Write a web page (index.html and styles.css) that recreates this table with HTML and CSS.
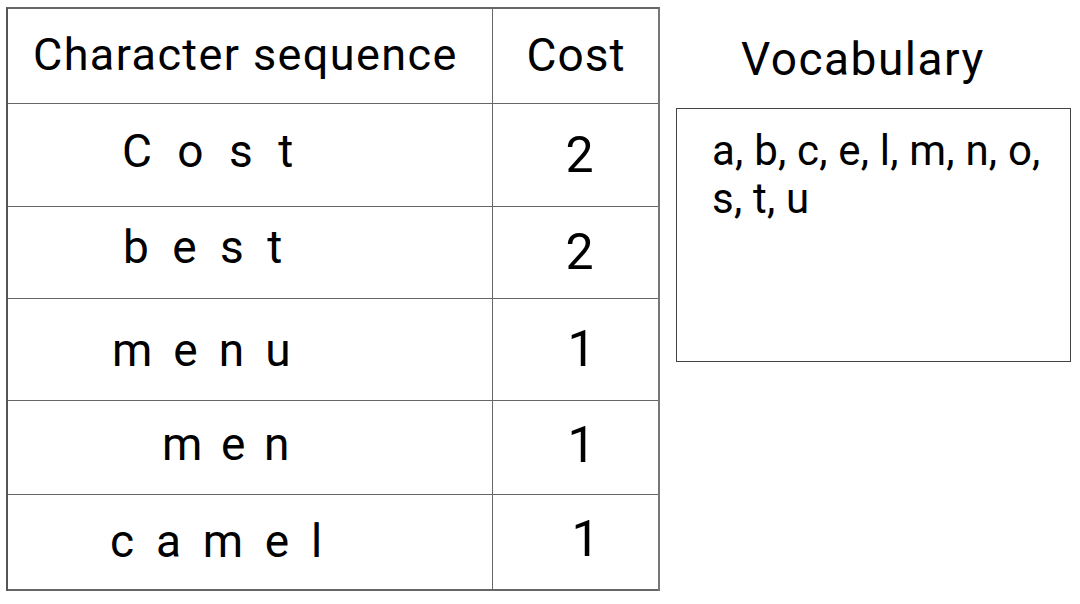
FILE: index.html
```html
<!DOCTYPE html>
<html lang="en">
<head>
<meta charset="utf-8">
<title>Character sequence cost</title>
<link rel="stylesheet" href="styles.css">
</head>
<body>
<div class="page">
  <div class="table">
    <div class="cell seq head seq-head">Character sequence</div>
    <div class="cell head cost-head">Cost</div>

    <div class="cell seq s1">C o s t</div>
    <div class="cell cost c1">2</div>

    <div class="cell seq s2">b e s t</div>
    <div class="cell cost c2">2</div>

    <div class="cell seq s3">m e n u</div>
    <div class="cell cost c3">1</div>

    <div class="cell seq s4">m e n</div>
    <div class="cell cost c4">1</div>

    <div class="cell seq s5 last">c a m e l</div>
    <div class="cell cost last c5">1</div>
  </div>

  <div class="vocab">
    <div class="vocab-title">Vocabulary</div>
    <div class="vocab-box">a, b, c, e, l, m, n, o,<br>s, t, u</div>
  </div>
</div>
</body>
</html>
```

FILE: styles.css
```css
html, body {
  margin: 0;
  padding: 0;
  background: #ffffff;
}

body {
  font-family: Roboto, "Liberation Sans", Arial, sans-serif;
  color: #000000;
  width: 1080px;
  height: 604px;
  overflow: hidden;
}

.page {
  display: flex;
  align-items: flex-start;
  padding: 7px 0 0 6px;
}

.table {
  display: grid;
  grid-template-columns: 485px 165px;
  grid-template-rows: 95px 103px 92px 102px 94px 96px;
  border-top: 2px solid #666666;
  border-left: 2px solid #555555;
  border-right: 2px solid #777777;
}

.cell {
  display: flex;
  align-items: center;
  border-bottom: 1.5px solid #666666;
  box-sizing: border-box;
}

.seq {
  border-right: 1.5px solid #666666;
  font-size: 46px;
  letter-spacing: 6px;
  white-space: pre;
}

.head {
  font-size: 45px;
  letter-spacing: 1.4px;
}

.seq-head {
  padding-left: 25px;
  padding-bottom: 4px;
}

.cost-head {
  font-size: 46px;
  letter-spacing: 1px;
  justify-content: center;
  padding-left: 1px;
  padding-bottom: 2px;
}

.s1 { padding-left: 114px; padding-bottom: 8px; letter-spacing: 7px; }
.s2 { padding-left: 115px; padding-bottom: 12px; }
.s3 { padding-left: 104px; letter-spacing: 4.8px; }
.s4 { padding-left: 154px; padding-bottom: 8px; letter-spacing: 3.6px; }
.s5 { padding-left: 102px; padding-bottom: 2px; letter-spacing: 5.2px; }

.cost {
  font-size: 50px;
  justify-content: center;
}

.c1 { padding-left: 8px; }
.c2 { padding-left: 8px; padding-bottom: 2px; }
.c3 { padding-left: 12px; padding-bottom: 2px; }
.c4 { padding-left: 12px; padding-bottom: 6px; }
.c5 {
  padding-left: 20px;
  padding-bottom: 6px;
}

.last {
  border-bottom: 2px solid #666666;
}

.vocab {
  display: flex;
  flex-direction: column;
  margin-left: 16px;
}

.vocab-title {
  font-size: 46px;
  letter-spacing: 1.5px;
  padding-left: 65px;
  height: 101px;
  line-height: 104px;
}

.vocab-box {
  width: 395px;
  height: 254px;
  box-sizing: border-box;
  border: 1.5px solid #444444;
  font-size: 42px;
  letter-spacing: 0.2px;
  line-height: 48px;
  padding: 18px 0 0 35px;
}
```
